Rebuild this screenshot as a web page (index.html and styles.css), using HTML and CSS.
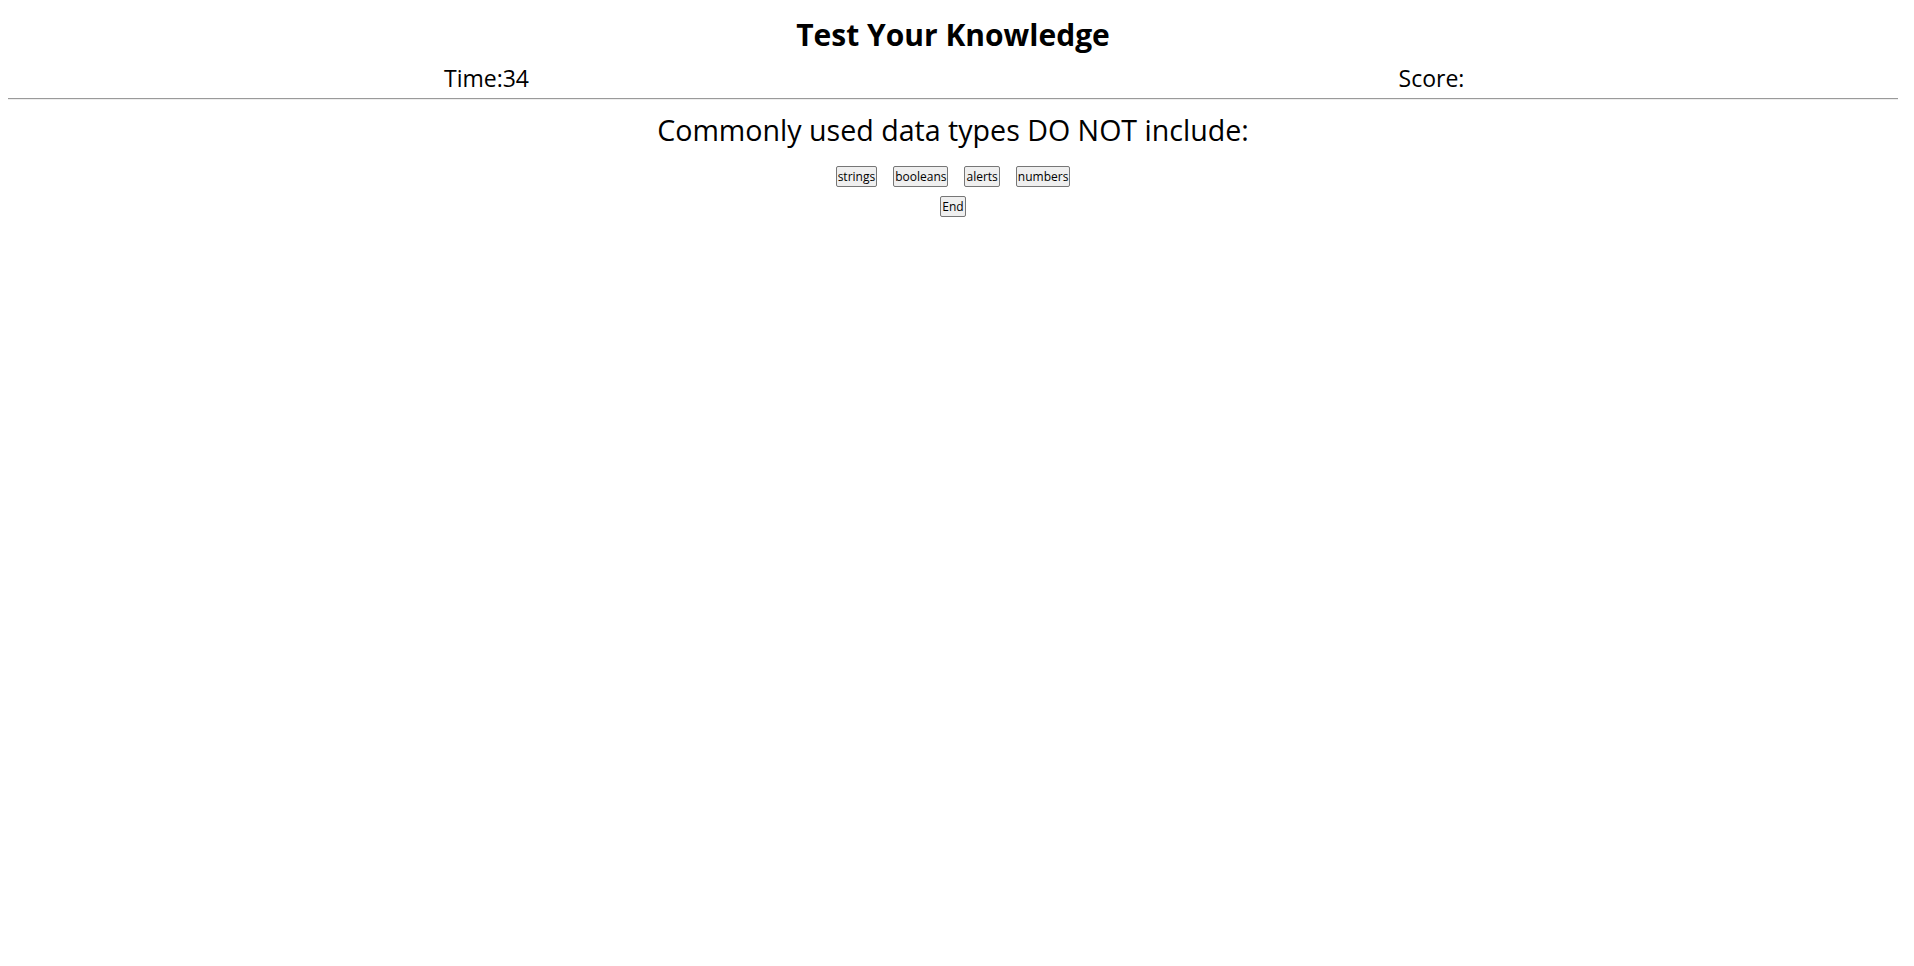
FILE: index.html
```html
<!DOCTYPE html>
<html>
<head>
<meta charset="utf-8">
<title>Quiz</title>
<link rel="stylesheet" href="styles.css">
</head>
<body>
<header class="header">
  <h1 class="title">Test Your Knowledge</h1>
  <div class="stats">
    <div class="stat">Time:34</div>
    <div class="stat">Score:</div>
  </div>
</header>
<hr class="divider">
<main class="quiz">
  <h2 class="question">Commonly used data types DO NOT include:</h2>
  <div class="choices">
    <button class="choice">strings</button>
    <button class="choice">booleans</button>
    <button class="choice">alerts</button>
    <button class="choice">numbers</button>
  </div>
  <div class="controls">
    <button class="choice">End</button>
  </div>
</main>
</body>
</html>
```

FILE: styles.css
```css
body {
  margin: 8px 16px 8px 8px;
  font-family: "Open Sans", "Noto Sans", sans-serif;
  color: #000;
  background: #fff;
}
.title {
  margin: 7px 0 0;
  text-align: center;
  font-size: 30px;
  font-weight: 700;
  line-height: 40px;
}
.stats {
  display: flex;
  margin: 8px -6px 0 0;
  padding-left: 6px;
}
.stat {
  flex: 1;
  text-align: center;
  font-size: 23px;
  line-height: 30px;
}
.divider {
  margin: 5px 0 0;
  border: 0;
  border-top: 1px solid #9a9a9a;
  border-bottom: 1px solid #eeeeee;
  height: 0;
}
.question {
  margin: 10px 0 0;
  text-align: center;
  font-size: 28.6px;
  font-weight: 400;
  line-height: 40px;
}
.choices {
  display: flex;
  justify-content: center;
  gap: 16px;
  margin-top: 16px;
}
.controls {
  display: flex;
  justify-content: center;
  margin-top: 9px;
}
.choice {
  font-family: "Open Sans", sans-serif;
  font-size: 12px;
  line-height: 17px;
  padding: 1px 1px;
  border: 1px solid #767676;
  border-radius: 2px;
  background: #efefef;
  color: #000;
}
```
